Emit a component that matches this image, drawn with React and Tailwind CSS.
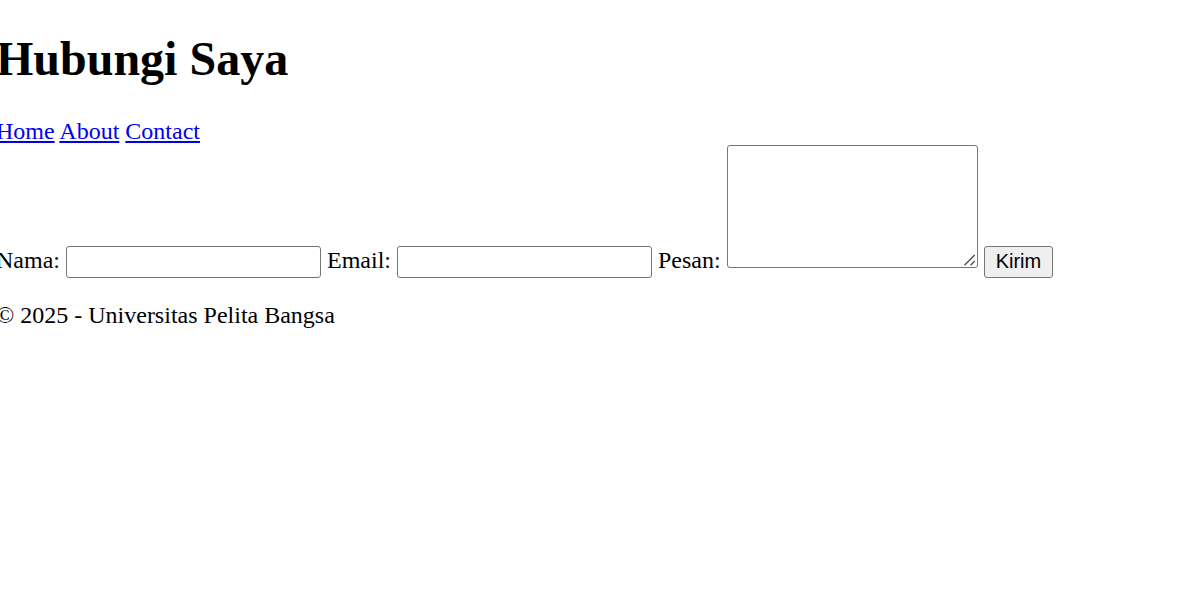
export default function App() {
  const field =
    "h-8 w-[255px] rounded-[3px] border border-[#767676] bg-white px-1 font-['Liberation_Sans',Arial,sans-serif] text-[20px]";

  return (
    <div className="-ml-1 bg-white pt-[31px] font-['Liberation_Serif','Times_New_Roman',serif] text-[24px] leading-7 text-black">
      <header>
        <h1 className="text-[48px] leading-[56px] font-bold">Hubungi Saya</h1>
      </header>
      <nav className="mt-[30px] text-[#0000ee]">
        <a className="underline" href="#home">Home</a>{" "}
        <a className="underline" href="#about">About</a>{" "}
        <a className="underline" href="#contact">Contact</a>
      </nav>
      <form
        className="flex flex-wrap items-end gap-1.5"
        onSubmit={(event) => event.preventDefault()}
      >
        <label htmlFor="nama" className="pb-1">Nama:</label>
        <input id="nama" type="text" className={field} />
        <label htmlFor="email" className="pb-1">Email:</label>
        <input id="email" type="email" className={field} />
        <label htmlFor="pesan" className="pb-1">Pesan:</label>
        <div className="relative mb-2.5">
          <textarea
            id="pesan"
            className="block h-[123px] w-[251px] resize-none rounded-[3px] border border-[#767676] bg-white p-1 font-['Liberation_Mono',monospace] text-[20px]"
          />
          <svg
            className="pointer-events-none absolute right-0.5 bottom-0.5 size-3"
            viewBox="0 0 12 12"
            fill="none"
            stroke="#505050"
            strokeWidth="1.4"
            aria-hidden="true"
          >
            <path d="M0.5 11.3 10.7 1.1M6.5 11.3 10.7 7.1" />
          </svg>
        </div>
        <button
          type="submit"
          className="h-8 rounded-[3px] border border-[#767676] bg-[#efefef] px-[11px] pb-0.5 font-['Liberation_Sans',Arial,sans-serif] text-[20px] leading-7"
        >
          Kirim
        </button>
      </form>
      <footer className="mt-[23px]">
        <p>© 2025 - Universitas Pelita Bangsa</p>
      </footer>
    </div>
  );
}
